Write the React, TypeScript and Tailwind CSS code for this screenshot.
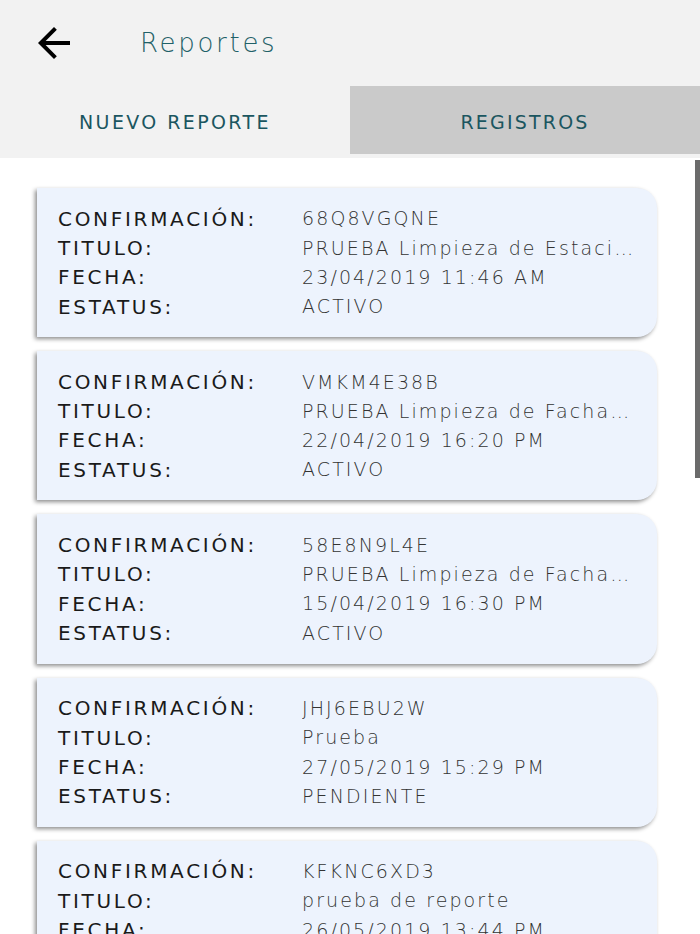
import React from "react";

const items = [
  { c: "68Q8VGQNE", t: "PRUEBA Limpieza de Estacionamiento", f: "23/04/2019 11:46 AM", e: "ACTIVO" },
  { c: "VMKM4E38B", t: "PRUEBA Limpieza de Fachada", f: "22/04/2019 16:20 PM", e: "ACTIVO" },
  { c: "58E8N9L4E", t: "PRUEBA Limpieza de Fachada", f: "15/04/2019 16:30 PM", e: "ACTIVO" },
  { c: "JHJ6EBU2W", t: "Prueba", f: "27/05/2019 15:29 PM", e: "PENDIENTE" },
  { c: "KFKNC6XD3", t: "prueba de reporte", f: "26/05/2019 13:44 PM", e: "ACTIVO" },
];

function Row({ label, value }: { label: string; value: string }) {
  return (
    <div className="flex h-[29.3px] items-center">
      <div className="w-[244px] shrink-0 text-[20px] tracking-[2.7px] text-[#1a1a1a]">{label}</div>
      <div className="min-w-0 flex-1 truncate text-[19px] font-extralight tracking-[2.1px] text-[#333]">{value}</div>
    </div>
  );
}

export default function App() {
  return (
    <div
      className="relative h-[934px] w-[700px] overflow-hidden bg-white"
      style={{ fontFamily: "'DejaVu Sans', 'Open Sans', sans-serif" }}
    >
      <div className="flex h-[86px] items-center bg-[#f2f2f2]">
        <div className="ml-[30px] flex h-12 w-12 items-center justify-center">
          <svg width="48" height="48" viewBox="0 0 24 24">
            <path d="M20 11H7.83l5.59-5.59L12 4l-8 8 8 8 1.41-1.41L7.83 13H20v-2z" fill="#000" />
          </svg>
        </div>
        <div className="ml-[62px] text-[26px] font-extralight tracking-[2.7px] text-[#1f6168]">Reportes</div>
      </div>
      <div className="flex h-[72px] bg-[#f2f2f2]">
        <div className="flex h-full w-[350px] items-center justify-center text-[19px] tracking-[2.4px] text-[#1b5660]">
          NUEVO REPORTE
        </div>
        <div className="flex h-[68px] flex-1 items-center justify-center bg-[#cacaca] pt-[4px] text-[19px] tracking-[2.2px] text-[#1b5660]">
          REGISTROS
        </div>
      </div>
      <div className="flex flex-col gap-[14px] pl-[37px] pr-[43px] pt-[30px]">
        {items.map((it, i) => (
          <div
            key={i}
            className="rounded-r-[20px] bg-[#edf3fd] py-4 pl-[21px] pr-[20px] shadow-[-2px_2px_4px_rgba(0,0,0,0.45)]"
          >
            <Row label="CONFIRMACIÓN:" value={it.c} />
            <Row label="TITULO:" value={it.t} />
            <Row label="FECHA:" value={it.f} />
            <Row label="ESTATUS:" value={it.e} />
          </div>
        ))}
      </div>
      <div className="absolute left-[695px] top-[160px] h-[318px] w-[5px] bg-[#6b6b6b]" />
    </div>
  );
}
